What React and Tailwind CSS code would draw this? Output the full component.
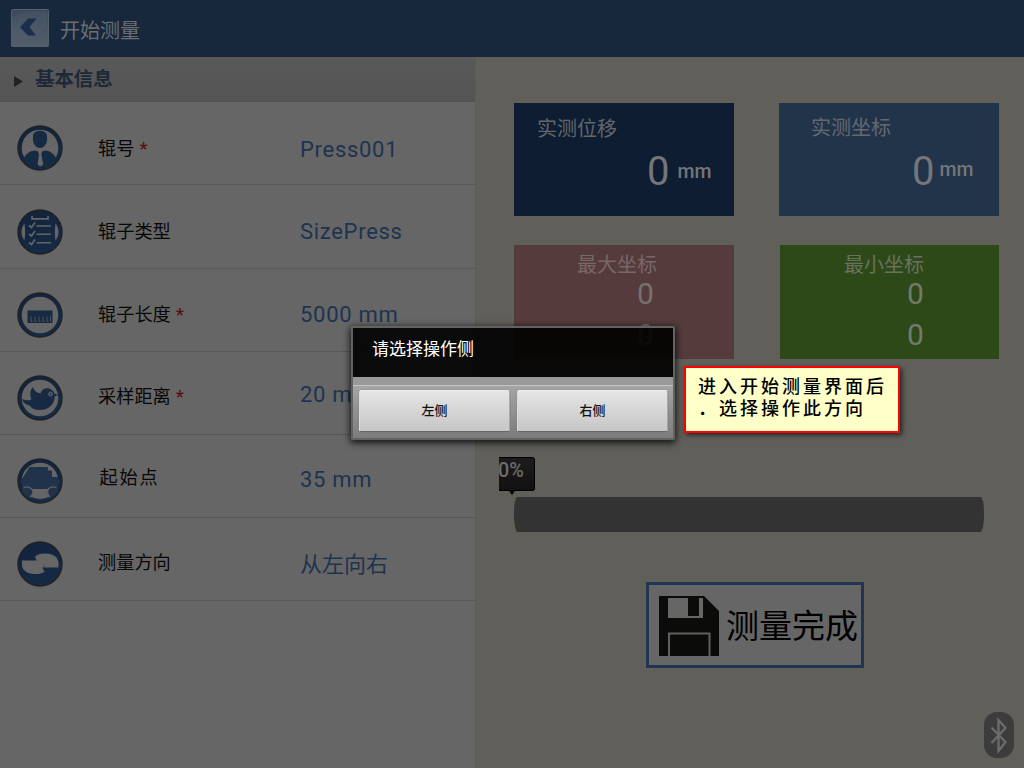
import React from "react";

const cjk = "font-['Roboto','Noto_Sans_CJK_SC',sans-serif]";

function Badge({ ring, children }) {
  return (
    <svg viewBox="0 0 46 46" className="h-[46px] w-[46px] shrink-0">
      <defs>
        <linearGradient id="badge" x1="0" y1="0" x2="0.4" y2="1">
          <stop offset="0" stopColor="#12233b" />
          <stop offset="1" stopColor="#162a45" />
        </linearGradient>
      </defs>
      <circle cx="23" cy="23" r="22" fill="url(#badge)" stroke="#1f2124" strokeWidth="1.400" />
      {ring && <circle cx="23" cy="23" r="18.300" fill="#666" />}
      {children}
    </svg>
  );
}

const blue = "#172a43";

const PersonIcon = () => (
  <Badge ring>
    <path d="M16 11c0-7 14-7 14 0 .5 5-.5 8-2.500 10-2 2.500-7 2.500-9 0-2-2-3-5-2.500-10z" fill={blue} />
    <path d="M17 25.500l6 1 6-1c5 1 9 4 10 8-3 5-9 8-16 8S10 38.500 7 33.500c1-4 5-7 10-8z" fill={blue} />
    <path d="M20.500 26h5l-1.200 3 2 10.500-3 2-2.800-2L22 29z" fill="#666" />
  </Badge>
);
const ListIcon = () => (
  <Badge>
    <g fill="none" stroke="#646566" strokeWidth="1.700">
      <path d="M15 7v2.800h16V7" />
      <path d="M19.500 17h14.500M19.500 25.300h14.500M19.500 33.800h14.500" strokeWidth="1.500" />
      <path d="M12 16.500l2.500 2 3.500-5M12 25l2.500 2 3.500-5M12 33.500l2.500 2 3.500-5" />
    </g>
    <path d="M7.500 14.500c-4 5-4 12 0 17 .8-5 .8-12 0-17zM38.500 14.500c4 5 4 12 0 17-.8-5-.8-12 0-17z" fill="#666" />
  </Badge>
);
const RulerIcon = () => (
  <Badge ring>
    <path d="M10.500 18.500h25V31h-25z" fill={blue} />
    <path d="M14 24.500v5l1.500-.5M18 24.500v5l1.500-.5M22 24.500v5l1.500-.5M26 24.500v5l1.500-.5M30 24.500v5l1.500-.5M33.500 24.500v5" fill="none" stroke="#55585d" strokeWidth=".9" />
  </Badge>
);
const BirdIcon = () => (
  <Badge ring>
    <path d="M5 24c4 1.500 8 2 9.500 0-2-4-1.500-9 1.500-12 1.200 4 3.500 5.500 7.500 6.500 1-4 4.500-6 8.500-5 3 1 5 3 5.500 5l3.500 1.500-3.200 1.500c-.5 8-6 13.500-15 13.500-5.500 0-8.500-2-10-4.500-4-.5-6.500-2.500-7.800-6.500z" fill={blue} />
    <circle cx="33.500" cy="19" r="2" fill="#33455a" stroke="#565f69" strokeWidth="1" />
  </Badge>
);
const CarIcon = () => (
  <Badge ring>
    <path d="M12.500 9h18.500v3.500h4V19h6.300v11.500H5V21z" fill="#20334b" />
    <path d="M5 29.500h36v4q-5 8-18 8T5 33.500z" fill="#20334b" />
    <path d="M15 31h17q-2 4 1 7-10 6-20 0 4-3 2-7z" fill="#666" />
    <path d="M6.500 30c4-2.500 9.500 0 9.500 4 0 2-1 4-3 5M39.500 30c-4-2.500-9.500 0-9.500 4 0 2 1 4 3 5" fill="none" stroke="#5c6167" strokeWidth="1.300" />
  </Badge>
);
const DirectionIcon = () => (
  <Badge>
    <path d="M18 15.500C23 10.500 41.500 11 41.500 22v4.500H26.500L28 24z" fill="#666" />
    <path d="M18 15.500l1.500 4H5v4C5 34.500 22 34.500 27.500 31l-2-4 2.500-3 3-5z" fill="#666" />
  </Badge>
);

const rows = [
  { label: "辊号", req: true, value: "Press001", Icon: PersonIcon, h: "h-[83px]", icon: "mt-[23px]", lab: "mt-[35px]", val: "mt-[35px]" },
  { label: "辊子类型", value: "SizePress", Icon: ListIcon, h: "h-[84px]", icon: "mt-[24px]", lab: "mt-[35px]", val: "mt-[34px]" },
  { label: "辊子长度", req: true, value: "5000 mm", Icon: RulerIcon, h: "h-[83px]", icon: "mt-[23px]", lab: "mt-[34px]", val: "mt-[33px]" },
  { label: "采样距离", req: true, value: "20 mm", Icon: BirdIcon, h: "h-[83px]", icon: "mt-[23px]", lab: "mt-[33px]", val: "mt-[30px]" },
  { label: "起始点", value: "35 mm", Icon: CarIcon, h: "h-[83px]", icon: "mt-[23px]", lab: "mt-[31px] pl-[1.500px] tracking-[1.800px]", val: "mt-[32px]" },
  { label: "测量方向", value: "从左向右", Icon: DirectionIcon, h: "h-[83px]", icon: "mt-[23px]", lab: "mt-[33px]", val: "mt-[34px]" },
];

function Row({ row }) {
  const { Icon } = row;
  return (
    <div className={`flex border-b border-[#575757] pl-[17px] ${row.h}`}>
      <div className={row.icon}><Icon /></div>
      <div className={`ml-[35px] flex h-6 w-[202px] items-center text-[18.200px] whitespace-nowrap text-[#070707] ${row.lab}`}>
        {row.label}
        {row.req && <span className="ml-[5px] text-[19px] text-[#5a0b0f]">*</span>}
      </div>
      <div className={`flex h-6 items-center text-[22px] whitespace-nowrap text-[#1d3350] ${row.val}`}>
        <span className={row.value === "从左向右" ? "" : "tracking-[0.700px]"}>{row.value}</span>
      </div>
    </div>
  );
}

function Reading({ title, box, titleCls, valueCls, unitCls }) {
  return (
    <div className={`flex h-[113px] flex-col ${box}`}>
      <div className={`h-6 text-[20px] leading-6 ${titleCls}`}>{title}</div>
      <div className={`flex ${valueCls}`}>
        <span className="text-[40px] leading-[46px] text-[#747679]">0</span>
        <span className={`text-[19.500px] leading-6 font-medium ${unitCls}`}>mm</span>
      </div>
    </div>
  );
}

function Extreme({ title, box, titleCls, valueCls }) {
  return (
    <div className={`flex h-[114px] flex-col ${box}`}>
      <div className={`h-6 text-[20px] leading-6 ${titleCls}`}>{title}</div>
      <div className={`text-[30px] leading-[41px] ${valueCls}`}>
        <div className="-mt-[4px]">0</div>
        <div>0</div>
      </div>
    </div>
  );
}

export default function App() {
  return (
    <div className={`relative flex h-[768px] w-[1024px] flex-col overflow-hidden bg-[#605f59] ${cjk}`}>
      <header className="flex h-[57px] shrink-0 items-start bg-[#17273c] pl-[11px]">
        <svg viewBox="0 0 38 38" className="mt-[9px] h-[38px] w-[38px]">
          <defs>
            <linearGradient id="back" x1="0" y1="0" x2="0" y2="1">
              <stop offset="0" stopColor="#3d4a5b" />
              <stop offset="1" stopColor="#535e6b" />
            </linearGradient>
          </defs>
          <rect x=".5" y=".5" width="37" height="37" rx="1" fill="url(#back)" stroke="#56606c" />
          <path d="M1 9Q14 0 36 3v13Q28 30 1 32z" fill="#66717e" opacity=".15" />
          <path d="M17.500 9.500h8L18.500 18l6.500 8.500h-8L9 18z" fill="#1b2f4a" />
        </svg>
        <h1 className="mt-[19px] ml-[11px] text-[20px] leading-6 text-[#6b6e72]">开始测量</h1>
      </header>
      <div className="flex flex-1">
        <aside className="w-[476px] shrink-0 border-r border-[#5b5b59] bg-[#666]">
          <div className="flex h-[45px] border-b border-[#505050] bg-linear-to-b from-[#595959] to-[#545454] pl-[14px]">
            <svg viewBox="0 0 9 11" className="mt-[19px] h-[11px] w-[9px]"><path d="M0 0l9 5.500L0 11z" fill="#222" /></svg>
            <h2 className="mt-[11px] ml-[12px] text-[19.400px] leading-6 font-bold text-[#1d2838]">基本信息</h2>
          </div>
          {rows.map((row) => <Row key={row.label} row={row} />)}
        </aside>
        <main className="flex flex-1 flex-col pt-[46.400px] pl-[38px]">
          <div className="flex gap-[45px]">
            <Reading title="实测位移" box="w-[220px] bg-[#0e1d31]" titleCls="mt-[14px] ml-[23px] text-[#62676e]" valueCls="mt-[8px] ml-[133px]" unitCls="mt-[11px] ml-[8px] text-[#747679]" />
            <Reading title="实测坐标" box="w-[220px] bg-[#22344a]" titleCls="mt-[13px] ml-[32px] text-[#646970]" valueCls="mt-[9px] ml-[133px]" unitCls="mt-[9px] ml-[5px] text-[#747679]" />
          </div>
          <div className="mt-[28.200px] flex gap-[46px]">
            <Extreme title="最大坐标" box="w-[220px] bg-[#553b3b]" titleCls="mt-[8px] ml-[63px] text-[#786767]" valueCls="ml-[123px] text-[#777171]" />
            <Extreme title="最小坐标" box="w-[219px] bg-[#2d4917]" titleCls="mt-[8px] ml-[64px] text-[#697161]" valueCls="ml-[127px] text-[#727a6b]" />
          </div>
          <div className="mt-[98.400px] -ml-[15px] h-[38px] w-[36px]">
            <div className="h-[34px] overflow-hidden rounded-r-[3px] border border-l-0 border-black bg-linear-to-b from-[#1c1c1c] to-[#111] text-[19.800px] leading-[26px] font-medium text-[#6c6c6c]">
              <span className="-ml-[1px]">0%</span>
            </div>
            <svg viewBox="0 0 6 4" className="ml-[10px] h-[4px] w-[6px]"><path d="M0 0h6L3 4z" fill="#080808" /></svg>
          </div>
          <svg viewBox="0 0 470 35" className="mt-[2px] h-[35px] w-[470px]">
            <path d="M3 0h464q3 3 3 17t-3 18H3q-3-4-3-18T3 0z" fill="#333" />
          </svg>
          <button className="mt-[50px] ml-[132px] flex h-[86px] w-[218px] border-[3px] border-[#20354f] bg-[#666] pl-[10px] text-left">
            <svg viewBox="0 0 60 60" className="mt-[11px] h-[60px] w-[60px] shrink-0">
              <path d="M0 0h45l15 15v45H0z" fill="#0b0c0a" />
              <path d="M9 2h20v18h11V2h4v20H9z" fill="#666" />
              <path d="M10 60V37.500h40.500V60" fill="none" stroke="#606060" strokeWidth="2" />
            </svg>
            <span className="mt-[18px] ml-[7px] text-[33px] leading-[48px] whitespace-nowrap text-black">测量完成</span>
          </button>
        </main>
      </div>

      <div className="absolute top-[712px] left-[984px] h-[46px] w-[30px] rounded-[13px] bg-[#3c3c3c]">
        <svg viewBox="0 0 30 46" className="h-[46px] w-[30px]">
          <path d="M7.500 15.500L21.500 30l-7 9V8l7 8L7.500 31" fill="none" stroke="#6c6c6c" strokeWidth="2.300" />
        </svg>
      </div>

      <div className="absolute top-[326px] left-[351px] flex h-[114px] w-[324px] flex-col rounded-[2px] border-2 border-[#626262] shadow-[0_2px_7px_1px_rgba(0,0,0,0.8)]">
        <div className="h-[49px] bg-black/90 pt-[9px] pl-[19px] text-[17px] leading-6 text-white">请选择操作侧</div>
        <div className="box-content h-[8px] border-b border-[#c4c4c4] bg-[#999]" />
        <div className="flex flex-1 gap-[7px] bg-linear-to-b from-[#a5a5a5] to-[#7c7c7c] pt-[4px] pl-[6px]">
          {["左侧", "右侧"].map((side) => (
            <button key={side} className="h-[42px] w-[151px] rounded-[2px] border border-t-[#ededed] border-r-[#aaa] border-b-[#666] border-l-[#ddd] bg-linear-to-b from-[#e5e5e5] to-[#c6c6c6] text-[13px] font-medium text-[#111] shadow-[0_0_1px_#555]">
              {side}
            </button>
          ))}
        </div>
      </div>

      <div className="absolute top-[366px] left-[684px] h-[67px] w-[216px] border-2 border-[#f00] bg-[#ffffc8] pt-[6px] pl-[12px] font-['Noto_Sans_CJK_SC',sans-serif] text-[18px] leading-[22px] font-medium tracking-[3px] whitespace-nowrap text-black shadow-[2px_2px_5px_rgba(0,0,0,0.65)]">
        <div>进入开始测量界面后</div>
        <div>．选择操作此方向</div>
      </div>
    </div>
  );
}
